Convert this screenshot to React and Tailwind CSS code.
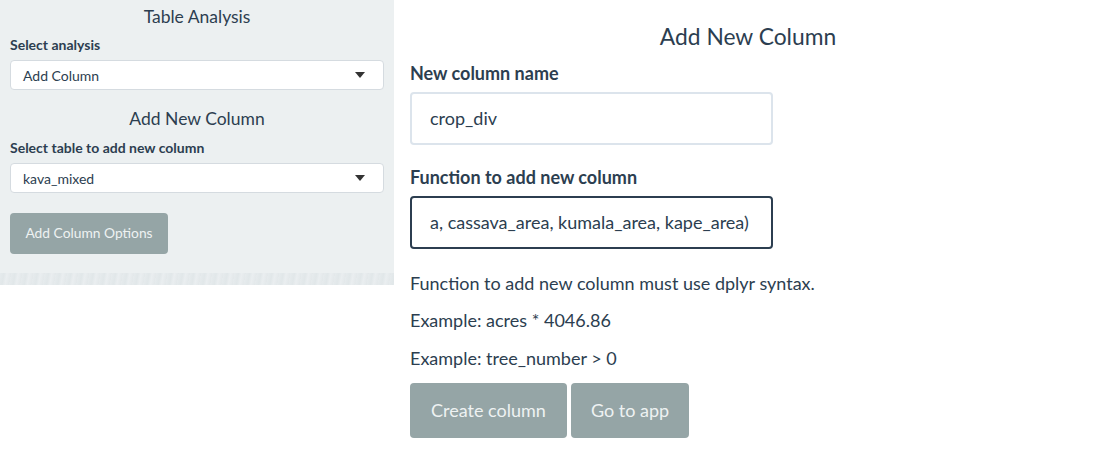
import React from "react";

function Caret() {
  return (
    <svg width="10" height="6" viewBox="0 0 10 6" className="shrink-0">
      <path d="M0 0 L10 0 L5 6 Z" fill="#333" />
    </svg>
  );
}

function SelectBox({ value }) {
  return (
    <div className="mx-[10px] h-[30px] bg-white border border-[#d5dbe0] rounded-[4px] flex items-center justify-between pl-[12px] pr-[18px] text-[14px] text-[#2c3e50]">
      <span>{value}</span>
      <Caret />
    </div>
  );
}

export default function App() {
  return (
    <div
      className="w-[1096px] h-[449px] bg-white flex text-[#2c3e50] overflow-hidden"
      style={{ fontFamily: "Lato, 'Open Sans', sans-serif" }}
    >
      <div className="w-[394px] shrink-0 self-start flex flex-col">
        <div className="bg-[#ecf0f1] flex flex-col pb-[19px]">
          <div className="mt-[6px] h-[22px] leading-[22px] text-center text-[17.5px]">Table Analysis</div>
          <div className="mt-[9px] h-[16px] leading-[16px] px-[10px] text-[14px] font-bold">Select analysis</div>
          <div className="mt-[7px]">
            <SelectBox value="Add Column" />
          </div>
          <div className="mt-[18px] h-[22px] leading-[22px] text-center text-[17.5px]">Add New Column</div>
          <div className="mt-[10px] h-[16px] leading-[16px] px-[10px] text-[14px] font-bold">Select table to add new column</div>
          <div className="mt-[7px]">
            <SelectBox value="kava_mixed" />
          </div>
          <div className="mt-[20px] px-[10px]">
            <div className="w-[158px] h-[41px] bg-[#95a5a6] rounded-[4px] flex items-center justify-center text-[13.8px] text-[#eef2f2]">
              Add Column Options
            </div>
          </div>
        </div>
        <div className="h-[12px] bg-[repeating-linear-gradient(100deg,#e6ebed_0px,#e1e7e9_4px,#eaeef0_7px,#e3e8ea_11px)]" />
      </div>

      <div className="flex-1 ml-[6px] px-[10px] flex flex-col">
        <div className="mt-[22px] h-[28px] leading-[28px] text-center text-[22.8px]">Add New Column</div>
        <div className="mt-[13px] h-[20px] leading-[20px] text-[18px] font-bold">New column name</div>
        <div className="mt-[9px] w-[363px] h-[53px] border-2 border-[#dce4ec] rounded-[4px] flex items-center pl-[18px] text-[18px]">
          crop_div
        </div>
        <div className="mt-[22px] h-[20px] leading-[20px] text-[18px] font-bold">Function to add new column</div>
        <div className="mt-[9px] w-[363px] h-[53px] border-2 border-[#2c3e50] rounded-[4px] flex items-center pl-[18px] text-[18px] whitespace-nowrap overflow-hidden">
          a, cassava_area, kumala_area, kape_area)
        </div>
        <div className="mt-[24px] h-[20px] leading-[20px] text-[18px]">Function to add new column must use dplyr syntax.</div>
        <div className="mt-[17px] h-[20px] leading-[20px] text-[18px]">Example: acres * 4046.86</div>
        <div className="mt-[18px] h-[20px] leading-[20px] text-[18px]">Example: tree_number &gt; 0</div>
        <div className="mt-[15px] flex gap-[4px]">
          <div className="w-[157px] h-[55px] bg-[#95a5a6] rounded-[4px] flex items-center justify-center text-[18px] text-[#eef2f2]">
            Create column
          </div>
          <div className="w-[118px] h-[55px] bg-[#95a5a6] rounded-[4px] flex items-center justify-center text-[18px] text-[#eef2f2]">
            Go to app
          </div>
        </div>
      </div>
    </div>
  );
}
